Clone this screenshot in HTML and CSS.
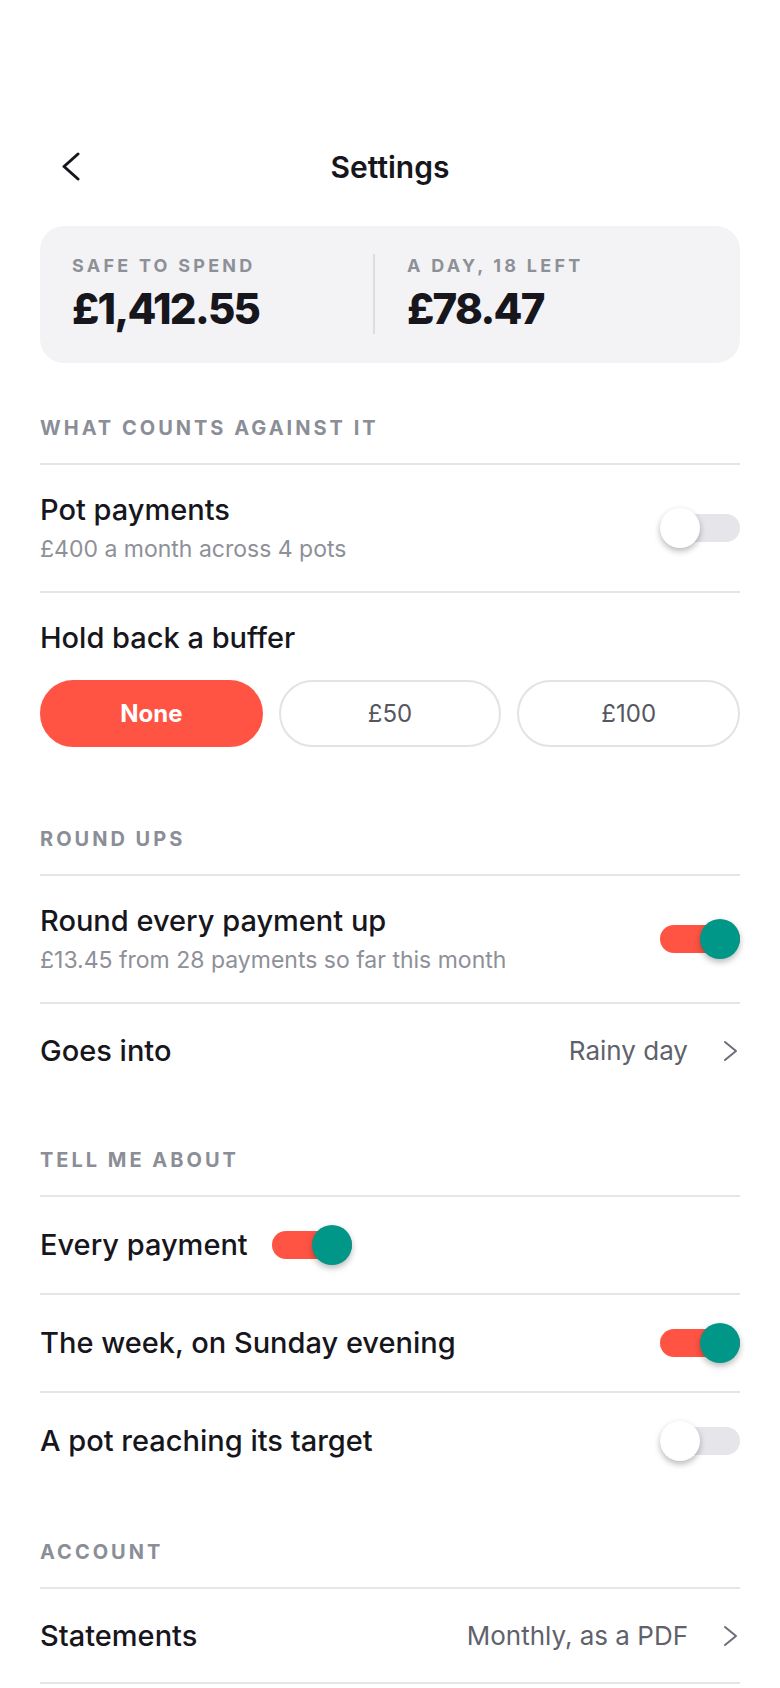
FILE: index.html
```html
<!DOCTYPE html>
<html lang="en">
<head>
    <meta charset="UTF-8">
    <meta name="viewport" content="width=device-width, initial-scale=1.0">
    <title>Settings</title>
    <link rel="stylesheet" href="styles.css">
</head>
<body>

    <div class="screen">
        <header class="topbar">
            <button class="back" aria-label="Back">
                <svg width="40" height="40" viewBox="0 0 40 40">
                    <path d="M38 7 L24 19.5 L38 32" fill="none" stroke="#16161c" stroke-width="3" stroke-linecap="round" stroke-linejoin="round"/>
                </svg>
            </button>
            <h1 class="title">Settings</h1>
            <span></span>
        </header>

        <section class="summary">
            <div class="stat">
                <div class="stat-label">Safe to spend</div>
                <div class="stat-value">£1,412.55</div>
            </div>
            <div class="stat stat-split">
                <div class="stat-label">A day, 18 left</div>
                <div class="stat-value">£78.47</div>
            </div>
        </section>

        <section class="group">
            <h2 class="group-title">What counts against it</h2>
            <div class="row">
                <div class="row-text">
                    <div class="row-title">Pot payments</div>
                    <div class="row-sub">£400 a month across 4 pots</div>
                </div>
                <span class="toggle"><span class="knob"></span></span>
            </div>
            <div class="block">
                <div class="row-title">Hold back a buffer</div>
                <div class="chips">
                    <button class="chip selected">None</button>
                    <button class="chip">£50</button>
                    <button class="chip">£100</button>
                </div>
            </div>
        </section>

        <section class="group">
            <h2 class="group-title">Round ups</h2>
            <div class="row">
                <div class="row-text">
                    <div class="row-title">Round every payment up</div>
                    <div class="row-sub">£13.45 from 28 payments so far this month</div>
                </div>
                <span class="toggle on"><span class="knob"></span></span>
            </div>
            <div class="row row-link">
                <div class="row-text">
                    <div class="row-title">Goes into</div>
                </div>
                <span class="row-value">Rainy day</span>
                <svg class="chevron" width="24" height="24" viewBox="0 0 24 24">
                    <path d="M9 3 L20 12 L9 21" fill="none" stroke="#6b6e76" stroke-width="2" stroke-linecap="round" stroke-linejoin="round"/>
                </svg>
            </div>
        </section>

        <section class="group">
            <h2 class="group-title">Tell me about</h2>
            <div class="row row-toggle">
                <div class="row-title">Every payment</div>
                <span class="toggle on"><span class="knob"></span></span>
            </div>
            <div class="row row-toggle">
                <div class="row-text">
                    <div class="row-title">The week, on Sunday evening</div>
                </div>
                <span class="toggle on"><span class="knob"></span></span>
            </div>
            <div class="row row-toggle">
                <div class="row-text">
                    <div class="row-title">A pot reaching its target</div>
                </div>
                <span class="toggle"><span class="knob"></span></span>
            </div>
        </section>

        <section class="group">
            <h2 class="group-title">Account</h2>
            <div class="row row-link row-last">
                <div class="row-text">
                    <div class="row-title">Statements</div>
                </div>
                <span class="row-value">Monthly, as a PDF</span>
                <svg class="chevron" width="24" height="24" viewBox="0 0 24 24">
                    <path d="M9 3 L20 12 L9 21" fill="none" stroke="#6b6e76" stroke-width="2" stroke-linecap="round" stroke-linejoin="round"/>
                </svg>
            </div>
        </section>
    </div>

</body>
</html>
```

FILE: styles.css
```css
body {
    margin: 0;
    background-color: #ffffff;
    font-family: Inter, "Noto Sans", sans-serif;
    color: #16161c;
}

.screen {
    padding: 131px 40px 0;
}

/* top bar */
.topbar {
    display: grid;
    grid-template-columns: 1fr auto 1fr;
    align-items: center;
    height: 72px;
}

.back {
    justify-self: start;
    display: flex;
    padding: 0;
    border: none;
    background: none;
    cursor: pointer;
}

.title {
    margin: 0;
    font-size: 30px;
    line-height: 36px;
    font-weight: 600;
}

/* safe to spend card */
.summary {
    display: flex;
    margin-top: 23px;
    padding: 28px 32px 29px;
    border-radius: 24px;
    background-color: #f3f3f6;
}

.stat {
    flex: 1;
}

.stat-split {
    padding-left: 32px;
    border-left: 2px solid #dcdce1;
}

.stat-label {
    font-size: 18px;
    line-height: 24px;
    font-weight: 700;
    letter-spacing: 0.18em;
    text-transform: uppercase;
    color: #8e9098;
}

.stat-value {
    margin-top: 6px;
    font-size: 42px;
    line-height: 50px;
    font-weight: 800;
    letter-spacing: -0.04em;
}

/* groups */
.group {
    margin-top: 53px;
}

.group + .group {
    margin-top: 51px;
}

.group-title {
    margin: 0;
    padding-bottom: 23px;
    font-size: 20px;
    line-height: 24px;
    font-weight: 700;
    letter-spacing: 0.15em;
    text-transform: uppercase;
    color: #8b8e97;
}

.row {
    display: flex;
    align-items: center;
    gap: 24px;
    padding: 27px 0;
    border-top: 2px solid #e5e5e9;
}

.row-last {
    border-bottom: 2px solid #e5e5e9;
}

.row-text {
    flex: 1;
}

.row-title {
    font-size: 29px;
    line-height: 36px;
    font-weight: 500;
}

.row-sub {
    margin-top: 6px;
    font-size: 23px;
    line-height: 30px;
    color: #8e9098;
}

.row-toggle {
    min-height: 42px;
}

.row-link {
    min-height: 39px;
    gap: 0;
}

.row-value {
    font-size: 26px;
    line-height: 36px;
    color: #5f626b;
}

.chevron {
    margin-left: 28px;
    flex-shrink: 0;
}

/* toggles */
.toggle {
    display: flex;
    align-items: center;
    flex-shrink: 0;
    width: 80px;
    height: 28px;
    border-radius: 14px;
    background-color: #e5e5ea;
}

.toggle.on {
    justify-content: flex-end;
    background-color: #ff5444;
}

.knob {
    flex-shrink: 0;
    width: 40px;
    height: 40px;
    border-radius: 50%;
    background-color: #ffffff;
    box-shadow: 0 3px 6px rgba(0, 0, 0, 0.28);
}

.toggle.on .knob {
    background-color: #009688;
}

/* buffer choice */
.block {
    padding: 27px 0 29px;
    border-top: 2px solid #e5e5e9;
}

.chips {
    display: grid;
    grid-template-columns: repeat(3, 1fr);
    gap: 16px;
    margin-top: 24px;
}

.chip {
    height: 67px;
    border: 2px solid #e3e3e7;
    border-radius: 34px;
    background-color: #ffffff;
    font-family: inherit;
    font-size: 24px;
    color: #55575f;
    cursor: pointer;
}

.chip.selected {
    border-color: #ff5444;
    background-color: #ff5444;
    font-weight: 700;
    color: #ffffff;
}
```
